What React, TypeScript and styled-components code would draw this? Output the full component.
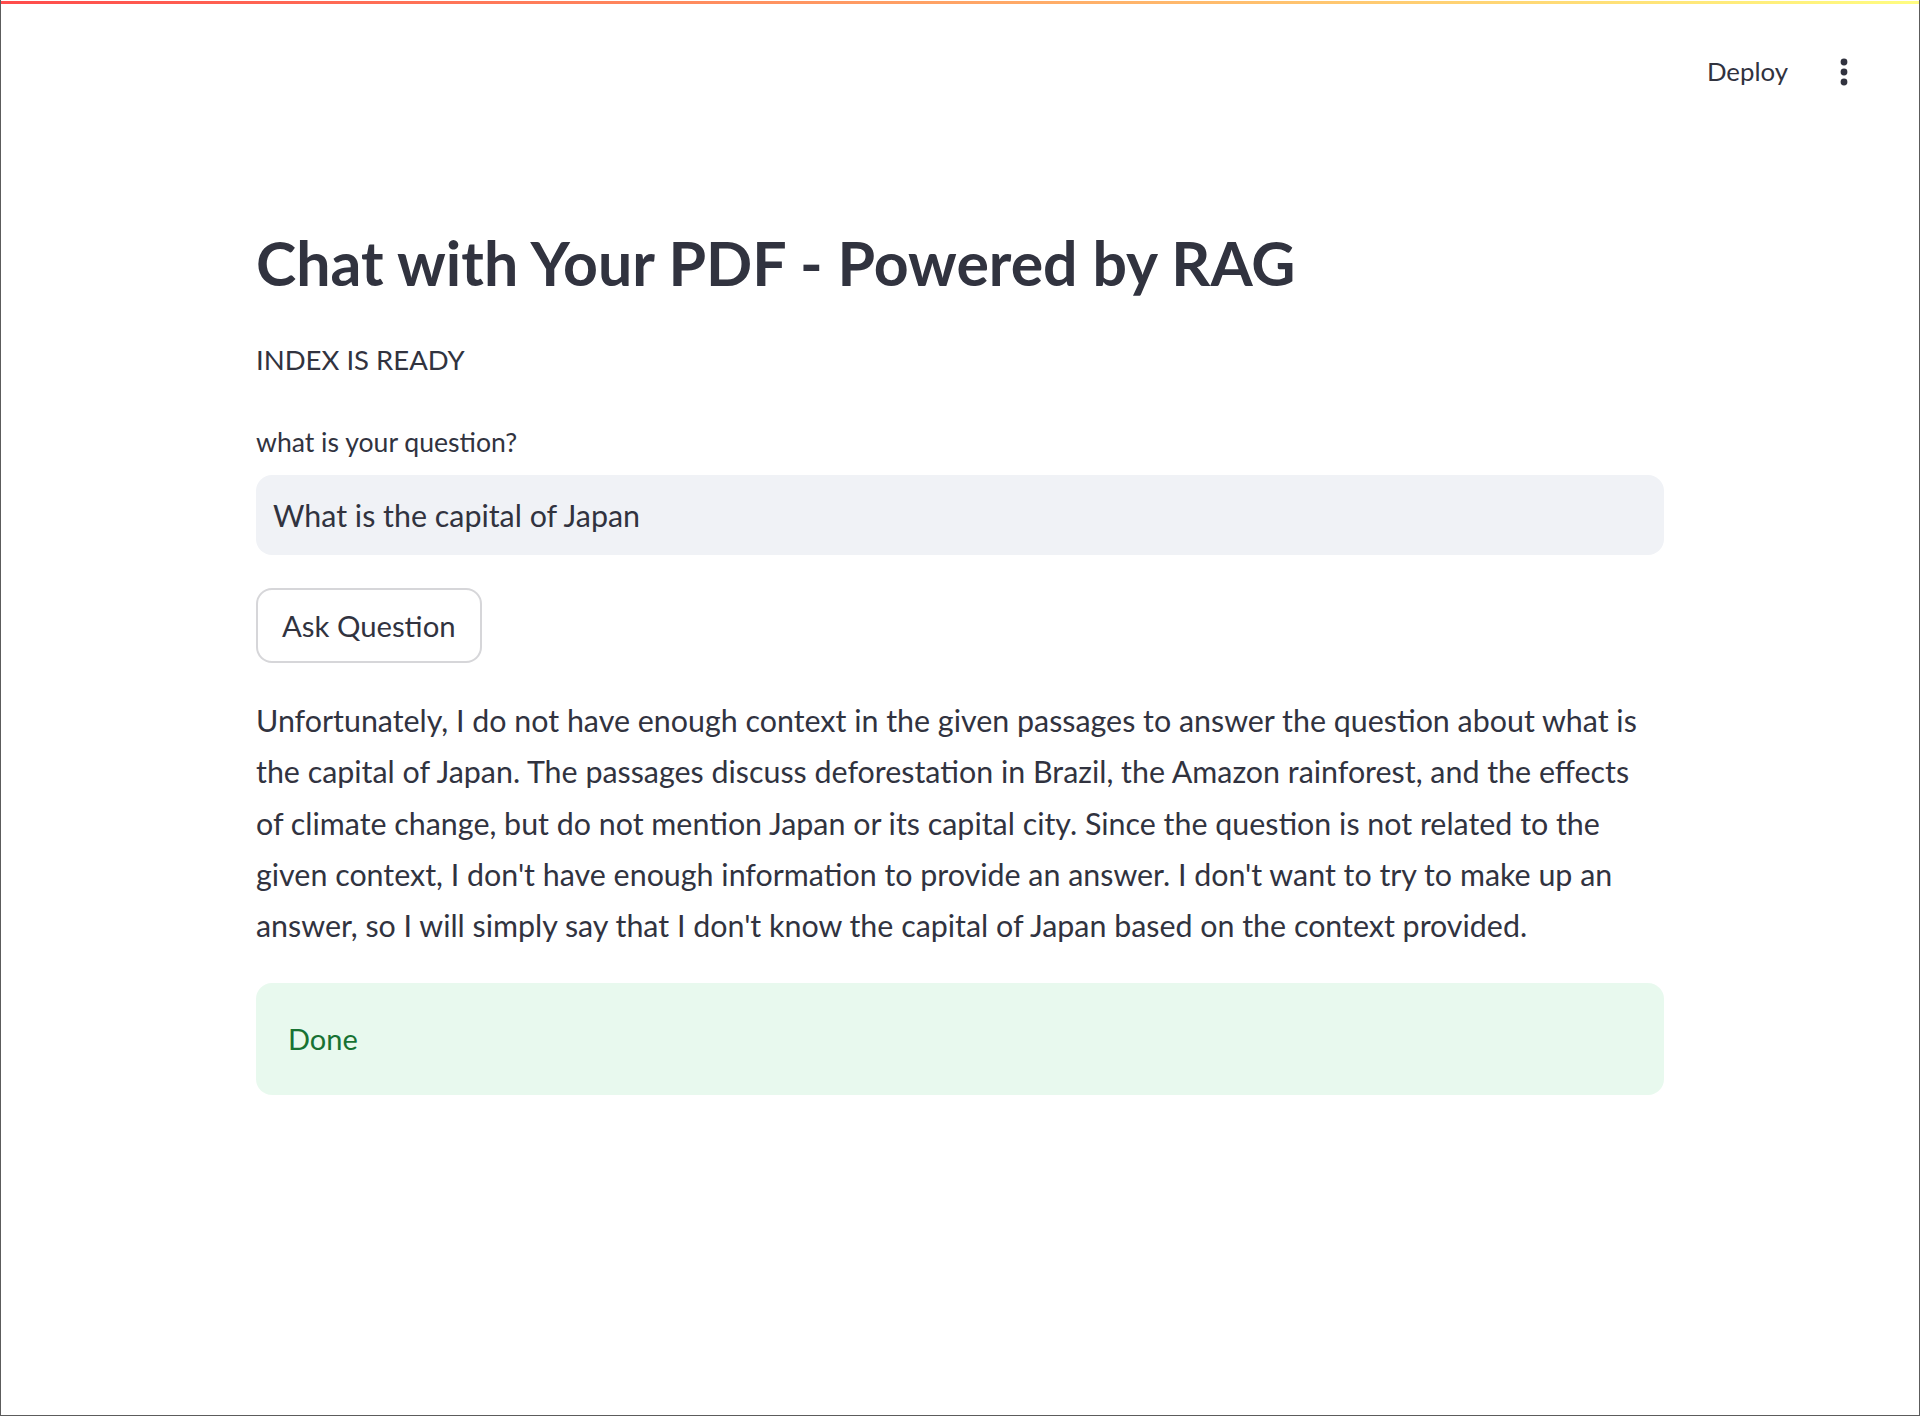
import React from "react";
import styled, { createGlobalStyle } from "styled-components";

const GlobalStyle = createGlobalStyle`
  html, body { margin: 0; padding: 0; background: #ffffff; }
  body { font-family: Lato, "Noto Sans", sans-serif; color: #31333f; }
  *, *::before, *::after { box-sizing: border-box; }
`;

const Frame = styled.div`
  width: 1920px;
  height: 1416px;
  padding-top: 1px;
  border-left: 1px solid #5c5c5c;
  border-right: 1px solid #5c5c5c;
  border-bottom: 1px solid #5c5c5c;
  display: flex;
  flex-direction: column;
  overflow: hidden;
`;

const Decoration = styled.div`
  height: 3px;
  flex: none;
  background: linear-gradient(90deg, #ff4b4b, #fffd80);
`;

const Header = styled.header`
  height: 136px;
  flex: none;
  display: flex;
  align-items: center;
  justify-content: flex-end;
  gap: 52px;
  padding-right: 71px;
`;

const DeployButton = styled.span`
  font-size: 25.8px;
  color: #31333f;
  line-height: 1;
`;

const MenuIcon = styled.svg`
  width: 8px;
  height: 28px;
  display: block;
`;

const Main = styled.main`
  width: 1408px;
  margin: 0 auto;
  padding-top: 86px;
  display: flex;
  flex-direction: column;
  align-items: flex-start;
`;

const Title = styled.h1`
  margin: 0;
  font-size: 60.8px;
  line-height: 74.4px;
  font-weight: 700;
  color: #31333f;
`;

const Text = styled.p<{ $mt: number; $size: number }>`
  margin: ${(p) => p.$mt}px 0 0;
  font-size: ${(p) => p.$size}px;
  line-height: 51.2px;
  color: #31333f;
`;

const Label = styled.label`
  margin-top: 35.5px;
  font-size: 26.6px;
  line-height: 42px;
  color: #31333f;
`;

const InputBox = styled.div`
  margin-top: 12px;
  width: 100%;
  height: 80px;
  border-radius: 16px;
  background: #f0f2f6;
  display: flex;
  align-items: center;
  padding: 0 17px;
  font-size: 30.4px;
  color: #31333f;
`;

const Button = styled.button`
  margin-top: 33px;
  height: 75px;
  padding: 0 24px;
  border: 2px solid rgba(49, 51, 63, 0.2);
  border-radius: 16px;
  background: #ffffff;
  font-family: inherit;
  font-size: 29.3px;
  color: #31333f;
`;

const SuccessBox = styled.div`
  margin-top: 31.5px;
  width: 100%;
  height: 112px;
  border-radius: 16px;
  background: rgba(33, 195, 84, 0.1);
  color: #177233;
  font-size: 29px;
  display: flex;
  align-items: center;
  padding: 0 32px;
`;

export default function App() {
  return (
    <>
      <GlobalStyle />
      <Frame>
        <Decoration />
        <Header>
          <DeployButton>Deploy</DeployButton>
          <MenuIcon viewBox="0 0 8 28">
            <circle cx="4" cy="4" r="3.4" fill="#31333f" />
            <circle cx="4" cy="14" r="3.4" fill="#31333f" />
            <circle cx="4" cy="24" r="3.4" fill="#31333f" />
          </MenuIcon>
        </Header>
        <Main>
          <Title>Chat with Your PDF - Powered by RAG</Title>
          <Text $mt={33.5} $size={27.5}>INDEX IS READY</Text>
          <Label>what is your question?</Label>
          <InputBox>What is the capital of Japan</InputBox>
          <Button>Ask Question</Button>
          <Text $mt={32.5} $size={30.4}>
            Unfortunately, I do not have enough context in the given passages to answer the question about what is
            <br />
            the capital of Japan. The passages discuss deforestation in Brazil, the Amazon rainforest, and the effects
            <br />
            of climate change, but do not mention Japan or its capital city. Since the question is not related to the
            <br />
            given context, I don't have enough information to provide an answer. I don't want to try to make up an
            <br />
            answer, so I will simply say that I don't know the capital of Japan based on the context provided.
          </Text>
          <SuccessBox>Done</SuccessBox>
        </Main>
      </Frame>
    </>
  );
}
